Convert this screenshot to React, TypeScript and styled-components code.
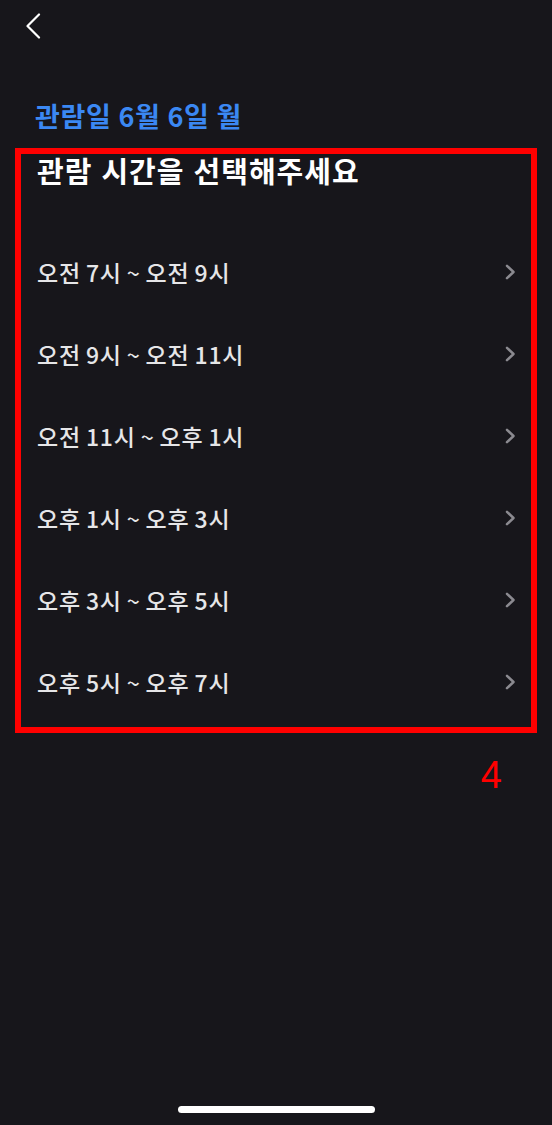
import styled, { createGlobalStyle } from 'styled-components'

const slots = [
  '오전 7시 ~ 오전 9시',
  '오전 9시 ~ 오전 11시',
  '오전 11시 ~ 오후 1시',
  '오후 1시 ~ 오후 3시',
  '오후 3시 ~ 오후 5시',
  '오후 5시 ~ 오후 7시',
]

const GlobalStyle = createGlobalStyle`
  html, body {
    margin: 0;
    padding: 0;
    background-color: #17161b;
  }
  body {
    font-family: 'Noto Sans CJK KR', 'Noto Sans', sans-serif;
  }
`

const BackIcon = () => (
  <svg width="16" height="26" viewBox="0 0 16 26" fill="none">
    <path d="M14 1.5L2.5 13L14 24.5" stroke="#fff" strokeWidth="2.2" strokeLinecap="round" strokeLinejoin="round" />
  </svg>
)

const ChevronIcon = () => (
  <svg width="13" height="16" viewBox="0 0 13 16" fill="none">
    <path d="M3 1.8L9.5 8L3 14.2" stroke="#8b8a90" strokeWidth="2.5" strokeLinecap="round" strokeLinejoin="round" />
  </svg>
)

const App = () => {
  return (
    <Page>
      <GlobalStyle />
      <TopBar>
        <button className="back" aria-label="뒤로">
          <BackIcon />
        </button>
      </TopBar>
      <DateTitle>관람일 6월 6일 월</DateTitle>
      <SlotBox>
        <Heading>관람 시간을 선택해주세요</Heading>
        {slots.map((slot) => (
          <SlotRow key={slot}>
            <span>{slot}</span>
            <ChevronIcon />
          </SlotRow>
        ))}
      </SlotBox>
      <Marker>4</Marker>
      <HomeIndicator />
    </Page>
  )
}

export default App

const Page = styled.div`
  height: 1125px;
  display: flex;
  flex-direction: column;
  background-color: #17161b;
  overflow: hidden;
`

const TopBar = styled.div`
  height: 52px;
  display: flex;
  align-items: flex-start;
  padding: 13px 0 0 25px;
  box-sizing: border-box;

  .back {
    background: none;
    border: 0;
    padding: 0;
    width: 20px;
    height: 26px;
    display: flex;
    align-items: center;
    cursor: pointer;
  }
`

const DateTitle = styled.h1`
  margin: 46px 0 0 35px;
  font-size: 27px;
  line-height: 36px;
  font-weight: 700;
  color: #3b88f3;
  letter-spacing: 0.7px;
`

const SlotBox = styled.section`
  margin: 14px 15px 0 15px;
  border: 6px solid #ff0000;
  padding: 0 14px 4px 16px;
  display: flex;
  flex-direction: column;
`

const Heading = styled.h2`
  margin: 0 0 45px 0;
  font-size: 29px;
  line-height: 32px;
  font-weight: 700;
  color: #ffffff;
  letter-spacing: 1px;
  word-spacing: 1.5px;
`

const SlotRow = styled.div`
  height: 82px;
  display: flex;
  align-items: center;
  justify-content: space-between;
  font-size: 23px;
  font-weight: 500;
  color: #e6e6e8;
  letter-spacing: 0.8px;
  word-spacing: -1px;
`

const Marker = styled.div`
  margin: 20px 50px 0 0;
  align-self: flex-end;
  font-family: 'Liberation Sans', Arial, sans-serif;
  font-size: 38px;
  line-height: 44px;
  color: #ff0000;
`

const HomeIndicator = styled.div`
  margin: auto 0 12px 178px;
  width: 197px;
  height: 7px;
  border-radius: 4px;
  background-color: #ffffff;
`
